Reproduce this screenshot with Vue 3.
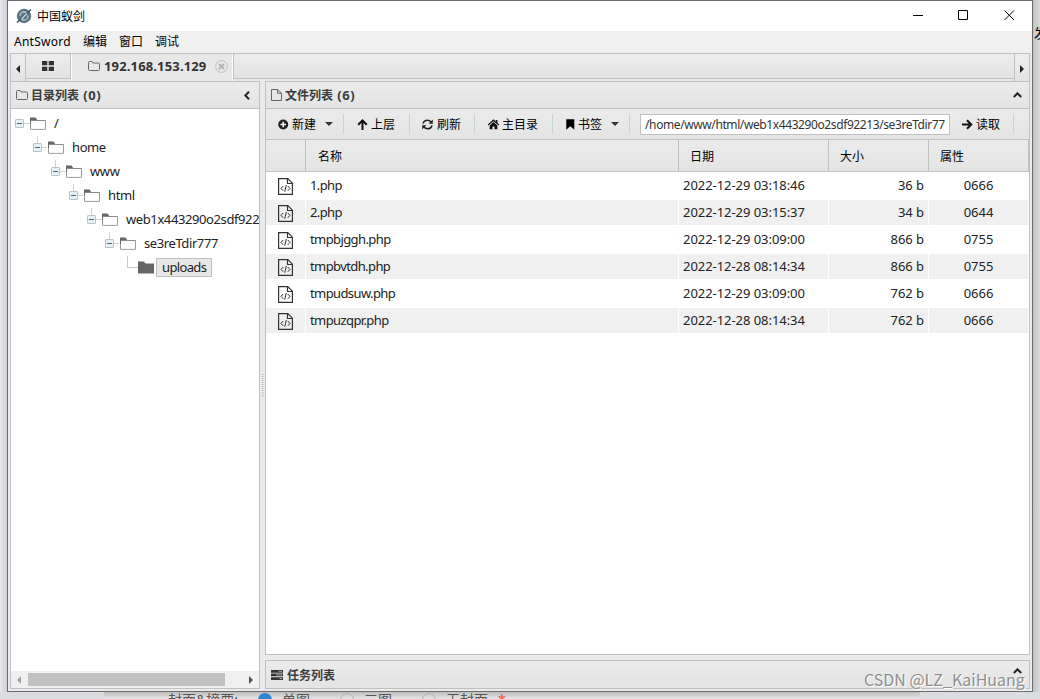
<template>
  <div class="desktop">
    <div class="middle">
      <div class="gutter gutter-left"></div>
      <div class="window">
        <header class="titlebar">
          <svg class="logo" width="16" height="16" viewBox="0 0 16 16">
            <circle cx="8" cy="8" r="7.2" fill="#5b7482" />
            <circle cx="8" cy="8" r="4" fill="none" stroke="#b9c8d0" stroke-width="1.3" stroke-dasharray="9 3" />
            <path d="M1 14.5L15 1.5" stroke="#3c505c" stroke-width="1.4" />
            <path d="M5.5 11L11 5.5" stroke="#d5dfe4" stroke-width="1.1" />
          </svg>
          <span class="title">中国蚁剑</span>
          <div class="controls">
            <svg width="11" height="11" viewBox="0 0 11 11"><path d="M1 5.5H11" /></svg>
            <svg width="11" height="11" viewBox="0 0 11 11"><path d="M.5 .5H9.5V9.5H.5Z" /></svg>
            <svg width="11" height="11" viewBox="0 0 11 11"><path d="M.5 .5L10 10M10 .5L.5 10" /></svg>
          </div>
        </header>

        <nav class="menu">
          <span class="menu-app">AntSword</span>
          <span v-for="m in menus" :key="m" class="menu-item">{{ m }}</span>
        </nav>

        <div class="tabbar">
          <div class="tab-arrow prev">
            <svg width="4" height="8" viewBox="0 0 4 8"><path d="M4 0V8L0 4Z" fill="#222" /></svg>
          </div>
          <div class="tabs">
            <div class="tab tab-home">
              <svg width="12" height="10" viewBox="0 0 12 10">
                <path d="M0 0H5.3V4.3H0ZM6.7 0H12V4.3H6.7ZM0 5.7H5.3V10H0ZM6.7 5.7H12V10H6.7Z" fill="#333" />
              </svg>
            </div>
            <div class="tab tab-active">
              <svg class="folder-o" width="12" height="10" viewBox="0 0 12 10">
                <path d="M.5 1.5Q.5 .5 1.5 .5H4L5 2H10.5Q11.5 2 11.5 3V8.5Q11.5 9.5 10.5 9.5H1.5Q.5 9.5 .5 8.5Z" />
              </svg>
              <span class="tab-text">192.168.153.129</span>
              <svg class="close" width="13" height="13" viewBox="0 0 13 13">
                <circle cx="6.5" cy="6.5" r="5.9" fill="none" stroke="#c0c0c0" />
                <path d="M4 4L9 9M9 4L4 9" stroke="#b5b5b5" stroke-width="2" />
              </svg>
            </div>
            <div class="tab-rest"></div>
          </div>
          <div class="tab-arrow next">
            <svg width="4" height="8" viewBox="0 0 4 8"><path d="M0 0V8L4 4Z" fill="#222" /></svg>
          </div>
        </div>

        <main class="body">
          <section class="panel tree-panel">
            <div class="panel-head">
              <svg class="folder-o" width="12" height="10" viewBox="0 0 12 10">
                <path d="M.5 1.5Q.5 .5 1.5 .5H4L5 2H10.5Q11.5 2 11.5 3V8.5Q11.5 9.5 10.5 9.5H1.5Q.5 9.5 .5 8.5Z" />
              </svg>
              <b>目录列表 <i>(0)</i></b>
              <svg class="chevron" width="6" height="9" viewBox="0 0 6 9"><path d="M5 .8L1.3 4.5L5 8.2" /></svg>
            </div>
            <div class="tree">
              <div
                v-for="(node, i) in nodes"
                :key="node"
                class="node"
                :style="{ paddingLeft: 4 + i * 18 + 'px' }"
              >
                <svg class="toggle" width="15" height="24" viewBox="0 0 15 24">
                  <path v-if="i === 6" d="M4.5 0V11.5H15" stroke="#c8c8c8" fill="none" />
                  <template v-else>
                    <path v-if="i > 0" d="M4.5 0V7" stroke="#d0d0d0" />
                    <path d="M9 11.5H14" stroke="#d0d0d0" />
                    <rect x=".5" y="7.5" width="8" height="8" rx=".6" fill="#e9f0f3" stroke="#b4c3ca" />
                    <path d="M2 11.5H7" stroke="#3f6b80" />
                  </template>
                </svg>
                <svg class="folder" width="16" height="13" viewBox="0 0 16 13">
                  <path v-if="i === 6" d="M0 .5H6L7.5 2.5H16V12.5H0Z" fill="#666" />
                  <template v-else>
                    <path d="M.5 3V12.4H15.5V3.5H7" fill="none" stroke="#9b9b9b" />
                    <path d="M0 .5H5.6L7.2 3V4H1V7H0Z" fill="#666" />
                    <path d="M1 3.5H15.5" stroke="#8a8a8a" />
                  </template>
                </svg>
                <span class="node-label" :class="{ selected: i === 6 }">{{ node }}</span>
              </div>
            </div>
            <div class="hscroll">
              <svg width="4" height="8" viewBox="0 0 4 8"><path d="M4 0V8L0 4Z" fill="#a3a3a3" /></svg>
              <div class="thumb"></div>
              <svg class="end" width="4" height="8" viewBox="0 0 4 8"><path d="M0 0V8L4 4Z" fill="#505050" /></svg>
            </div>
          </section>

          <div class="splitter"><div class="grip"></div></div>

          <div class="right">
            <section class="panel file-panel">
              <div class="panel-head">
                <svg class="file-o" width="11" height="12" viewBox="0 0 11 12">
                  <path d="M.5 .5H6.5L10.5 4.2V11.5H.5ZM6.5 .5V4.2H10.5" fill="none" stroke="#666" />
                </svg>
                <b>文件列表 <i>(6)</i></b>
                <svg class="chevron" width="9" height="6" viewBox="0 0 9 6"><path d="M.8 5L4.5 1.3L8.2 5" /></svg>
              </div>

              <div class="toolbar">
                <div class="tb-item first">
                  <svg width="11" height="11" viewBox="0 0 11 11">
                    <circle cx="5.2" cy="5.5" r="5" fill="#222" />
                    <path d="M5.2 2.7V8.3M2.4 5.5H8" stroke="#eee" stroke-width="1.7" />
                  </svg>
                  <span>新建</span>
                  <span class="caret"></span>
                </div>
                <div class="tb-item">
                  <svg width="11" height="11" viewBox="0 0 11 11">
                    <path d="M5.5 11V2M1.2 5.8L5.5 1.5L9.8 5.8" fill="none" stroke="#111" stroke-width="2" />
                  </svg>
                  <span>上层</span>
                </div>
                <div class="tb-item near">
                  <svg width="11" height="11" viewBox="0 0 11 11">
                    <path d="M1 4.6Q2 1.3 5.5 1.3Q7.6 1.3 9 3M10 6.4Q9 9.7 5.5 9.7Q3.4 9.7 2 8" fill="none" stroke="#222" stroke-width="1.6" />
                    <path d="M10.8 .6V4.8H6.6ZM.2 10.4V6.2H4.4Z" fill="#222" />
                  </svg>
                  <span class="shift">刷新</span>
                </div>
                <div class="tb-item">
                  <svg width="11" height="11" viewBox="0 0 11 11">
                    <path d="M0 6L5.5 1.2L11 6" fill="none" stroke="#111" stroke-width="1.3" />
                    <path d="M7.8 1H9.4V4.5L7.8 3Z M1.7 6.4L5.5 3.1L9.3 6.4V10.3H6.5V7.4H4.5V10.3H1.7Z" fill="#111" />
                  </svg>
                  <span>主目录</span>
                </div>
                <div class="tb-item mark">
                  <svg width="9" height="11" viewBox="0 0 9 11"><path d="M.3 .3H8.3V10.7L4.3 7.3L.3 10.7Z" fill="#000" /></svg>
                  <span>书签</span>
                  <span class="caret"></span>
                </div>
                <input v-model="path" class="path" />
                <div class="tb-item read">
                  <svg width="11" height="11" viewBox="0 0 11 11">
                    <path d="M0 5.5H9M5 1.2L9.3 5.5L5 9.8" fill="none" stroke="#111" stroke-width="2" />
                  </svg>
                  <span>读取</span>
                </div>
              </div>

              <div class="grid-row grid-head">
                <div class="c-icon"></div>
                <div class="c-name">名称</div>
                <div class="c-date">日期</div>
                <div class="c-size">大小</div>
                <div class="c-attr">属性</div>
              </div>
              <div v-for="f in files" :key="f.name" class="grid-row file">
                <div class="c-icon">
                  <svg width="15" height="17" viewBox="0 0 15 17" fill="none" stroke="#333">
                    <path d="M.6 .6H9.8L14.4 5.2V16.4H.6Z" stroke-width="1.2" />
                    <path d="M9.5 .6V5.5H14.4" stroke-width="1.2" />
                    <path d="M5.2 8L3 10.4L5.2 12.8M9.8 8L12 10.4L9.8 12.8M8.3 7L6.7 13.8" />
                  </svg>
                </div>
                <div class="c-name">{{ f.name }}</div>
                <div class="c-date">{{ f.date }}</div>
                <div class="c-size">{{ f.size }}</div>
                <div class="c-attr">{{ f.attr }}</div>
              </div>
            </section>

            <section class="panel task-panel">
              <div class="panel-head">
                <svg class="tasks" width="12" height="10" viewBox="0 0 12 10">
                  <path d="M0 0H12V2.7H0ZM0 3.6H12V6.3H0ZM0 7.2H12V10H0Z" fill="#333" />
                  <path d="M7.5 1.3H11M5 4.9H11M8.5 8.6H11" stroke="#aaa" />
                </svg>
                <b>任务列表</b>
                <svg class="chevron" width="9" height="6" viewBox="0 0 9 6"><path d="M.8 5L4.5 1.3L8.2 5" /></svg>
              </div>
            </section>
          </div>
        </main>
      </div>
      <div class="gutter gutter-right"><span>发</span></div>
    </div>

    <div class="behind">
      <div class="behind-form">
        <span class="field">封面&amp;摘要:</span>
        <span class="radio on"></span><span class="opt">单图</span>
        <span class="radio"></span><span class="opt">三图</span>
        <span class="radio"></span><span class="opt last">无封面</span>
        <span class="star">*</span>
      </div>
    </div>

    <div class="watermark">CSDN @LZ_KaiHuang</div>
  </div>
</template>

<script setup>
import { ref } from "vue";

const menus = ["编辑", "窗口", "调试"];

const nodes = [
  "/",
  "home",
  "www",
  "html",
  "web1x443290o2sdf922",
  "se3reTdir777",
  "uploads",
];

const path = ref("/home/www/html/web1x443290o2sdf92213/se3reTdir77");

const files = ref([
  { name: "1.php", date: "2022-12-29 03:18:46", size: "36 b", attr: "0666" },
  { name: "2.php", date: "2022-12-29 03:15:37", size: "34 b", attr: "0644" },
  { name: "tmpbjggh.php", date: "2022-12-29 03:09:00", size: "866 b", attr: "0755" },
  { name: "tmpbvtdh.php", date: "2022-12-28 08:14:34", size: "866 b", attr: "0755" },
  { name: "tmpudsuw.php", date: "2022-12-29 03:09:00", size: "762 b", attr: "0666" },
  { name: "tmpuzqpr.php", date: "2022-12-28 08:14:34", size: "762 b", attr: "0666" },
]);
</script>

<style>
body {
  overflow: hidden;
}
</style>

<style scoped>
.desktop {
  position: relative;
  width: 1040px;
  height: 699px;
  overflow: hidden;
  background: #dcdde0;
  font-family: "Noto Sans", "Noto Sans CJK SC", sans-serif;
  font-size: 12px;
  color: #000;
}
.desktop * {
  box-sizing: border-box;
}
svg {
  flex: none;
  display: block;
}
.middle {
  display: flex;
  height: 692px;
}
.gutter {
  width: 7px;
  flex: none;
  overflow: hidden;
}
.gutter-left {
  background: linear-gradient(90deg, #e6e8eb, #cfd1d4);
}
.gutter-right {
  background: linear-gradient(90deg, #c4c4c6, #dadbde);
  padding-top: 24px;
}
.gutter-right span {
  margin-left: 1px;
  font-size: 14px;
  line-height: 18px;
}
.window {
  width: 1026px;
  display: flex;
  flex-direction: column;
  border: 1px solid #6b6b6b;
  background: #ebebeb;
}

/* title bar + menu */
.titlebar {
  display: flex;
  align-items: center;
  height: 30px;
  padding: 0 17px 1px 8px;
  background: #fff;
}
.title {
  margin-left: 5px;
}
.controls {
  display: flex;
  gap: 35px;
  margin-left: auto;
}
.controls svg {
  fill: none;
  stroke: #000;
}
.menu {
  display: flex;
  align-items: center;
  height: 22px;
  padding: 0 0 2px 6px;
  background: #f0f0f0;
}
.menu-app {
  width: 57px;
  letter-spacing: 0.25px;
}
.menu-item {
  margin-left: 12px;
}

/* tabs */
.tabbar {
  display: flex;
  height: 28px;
  margin: 0 2px;
  border: 1px solid #c0c0c0;
  border-bottom: none;
  background: #e8e8e8;
}
.tab-arrow {
  width: 15px;
  flex: none;
  display: flex;
  align-items: center;
  justify-content: center;
  padding-top: 2px;
  background: linear-gradient(#efefef, #e3e3e3);
}
.tab-arrow.prev {
  border-right: 1px solid #c0c0c0;
}
.tab-arrow.next {
  border-left: 1px solid #c0c0c0;
}
.tabs {
  flex: 1;
  display: flex;
}
.tab {
  display: flex;
  align-items: center;
  height: 25px;
}
.tab-home {
  width: 45px;
  justify-content: center;
  border-right: 1px solid #c0c0c0;
  border-bottom: 1px solid #c0c0c0;
  background: linear-gradient(#ededed, #e3e3e3);
}
.tab-active {
  width: 162px;
  height: 27px;
  padding: 0 0 3px 16px;
  border-left: 1px solid #fff;
  border-right: 1px solid #fff;
  background: #e8e8e8;
}
.tab-text {
  width: 103px;
  margin-left: 4px;
  font-size: 13px;
  font-weight: bold;
  letter-spacing: 0.15px;
  color: #333;
}
.tab-active .close {
  margin-left: 8px;
}
.tab-rest {
  flex: 1;
  height: 25px;
  border-left: 1px solid #c0c0c0;
  border-bottom: 1px solid #c0c0c0;
  background: linear-gradient(#ededed, #e3e3e3);
}
.folder-o {
  fill: none;
  stroke: #666;
}

/* panels */
.body {
  flex: 1;
  display: flex;
  min-height: 0;
  margin: 0 2px 2px;
}
.panel {
  display: flex;
  flex-direction: column;
  border: 1px solid #c0c0c0;
  background: #fff;
}
.panel-head {
  flex: none;
  display: flex;
  align-items: center;
  height: 27px;
  padding: 0 7px 0 5px;
  border-bottom: 1px solid #c0c0c0;
  background: linear-gradient(#ebebeb, #e4e4e4);
}
.panel-head b {
  margin-left: 3px;
  color: #3c3c3c;
  white-space: pre;
}
.task-panel .panel-head b {
  margin-left: 4px;
}
.panel-head i {
  margin-left: 1px;
  font-style: normal;
  font-size: 13px;
  letter-spacing: 0.6px;
}
.chevron {
  margin-left: auto;
  fill: none;
  stroke: #222;
  stroke-width: 2;
}
.tree-panel {
  width: 250px;
}
.tree-panel .chevron {
  margin-right: 2px;
}
.tree {
  flex: 1;
  padding-top: 3px;
  overflow: hidden;
}
.node {
  display: flex;
  align-items: center;
  height: 24px;
  padding-bottom: 1px;
  white-space: nowrap;
}
.node-label {
  margin-left: 2px;
  padding: 0 5px;
  height: 19px;
  line-height: 16px;
  border: 1px solid transparent;
  font-size: 13px;
  letter-spacing: -0.4px;
  color: #222;
}
.node-label.selected {
  border-color: #c0c0c0;
  background: #e8e8e8;
  letter-spacing: -0.65px;
}
.hscroll {
  display: flex;
  align-items: center;
  height: 17px;
  padding: 0 6px;
  background: #f0f0f0;
}
.thumb {
  width: 197px;
  height: 13px;
  margin-left: 7px;
  background: #c1c1c1;
}
.hscroll .end {
  margin-left: auto;
}
.splitter {
  width: 5px;
  display: flex;
  align-items: center;
  justify-content: center;
}
.grip {
  width: 2px;
  height: 23px;
  border-left: 1px dotted #b5b5b5;
  border-right: 1px dotted #d5d5d5;
}
.right {
  flex: 1;
  min-width: 0;
  display: flex;
  flex-direction: column;
  gap: 5px;
}
.file-panel {
  flex: 1;
}
.task-panel {
  height: 29px;
}
.task-panel .panel-head {
  border-bottom: none;
}
.task-panel .chevron {
  margin-bottom: 7px;
}

/* toolbar */
.toolbar {
  flex: none;
  display: flex;
  align-items: center;
  height: 31px;
  border-bottom: 1px solid #c0c0c0;
  background: linear-gradient(#ebebeb, #e4e4e4);
}
.tb-item {
  display: flex;
  align-items: center;
  gap: 3px;
  height: 20px;
  padding: 0 14px 0 13px;
  border-right: 1px solid #c5d5db;
  white-space: nowrap;
}
.tb-item.first {
  width: 78px;
  padding: 0 10px 0 12px;
}
.tb-item.near {
  padding: 0 13px 0 12px;
}
.tb-item.near .shift {
  margin-left: 1px;
}
.tb-item.mark {
  width: 77px;
  padding-right: 10px;
}
.tb-item.read {
  width: 64px;
  padding: 0 0 0 12px;
}
.caret {
  margin-left: auto;
  border: 4px solid transparent;
  border-top-color: #333;
  border-bottom: none;
}
.path {
  width: 310px;
  height: 21px;
  margin-left: 10px;
  padding: 0 2px 0 4px;
  border: 1px solid #c0c0c0;
  outline: none;
  background: #fff;
  font-family: inherit;
  font-size: 12px;
  letter-spacing: -0.4px;
  color: #333;
}

/* file grid */
.grid-row {
  flex: none;
  display: flex;
}
.grid-row > div {
  display: flex;
  align-items: center;
}
.c-icon {
  width: 40px;
}
.c-name {
  width: 373px;
}
.c-date {
  width: 150px;
}
.c-size {
  width: 100px;
}
.c-attr {
  width: 100px;
}
.grid-head {
  height: 32px;
  border-bottom: 1px solid #c0c0c0;
  background: linear-gradient(#ebebeb, #e4e4e4);
}
.grid-head > div {
  padding-left: 11px;
  border-right: 1px solid #c0c0c0;
}
.grid-head .c-name {
  padding-left: 12px;
}
.file {
  height: 27px;
  padding: 1px 0;
  font-size: 13px;
  letter-spacing: -0.05px;
  color: #222;
}
.file > div {
  padding: 0 0 2px 4px;
  border-right: 1px solid #fff;
}
.file .c-icon {
  padding: 1px 0 0 12px;
}
.file .c-name {
  letter-spacing: -0.6px;
}
.file:nth-child(odd) > div {
  background: #f0f0f0;
}
.file .c-size {
  justify-content: flex-end;
  padding-right: 4px;
}
.file .c-attr {
  justify-content: center;
  padding-left: 0;
}

/* page under the window */
.behind {
  height: 7px;
  padding: 0 120px 0 104px;
  overflow: hidden;
}
.behind-form {
  display: flex;
  align-items: flex-start;
  height: 7px;
  padding-left: 64px;
  background: linear-gradient(#bebebe, #e6e6e6);
  font-size: 14px;
  line-height: 16px;
  color: #555;
}
.field {
  width: 90px;
  white-space: nowrap;
}
.radio {
  flex: none;
  width: 14px;
  height: 14px;
  margin-top: 1px;
  border: 1px solid #b0b3b8;
  border-radius: 50%;
}
.radio.on {
  border: 4px solid #2b85d0;
  background: #2b85d0;
}
.opt {
  width: 58px;
  margin-left: 10px;
}
.opt.last {
  width: 52px;
}
.star {
  color: #e0533c;
}

.watermark {
  position: absolute;
  top: 669px;
  left: 864px;
  font-family: "Noto Sans CJK SC", sans-serif;
  font-size: 16px;
  line-height: 20px;
  white-space: nowrap;
  color: #8f8f8f;
  text-shadow: 1px 1px 0 #fff;
}
</style>
